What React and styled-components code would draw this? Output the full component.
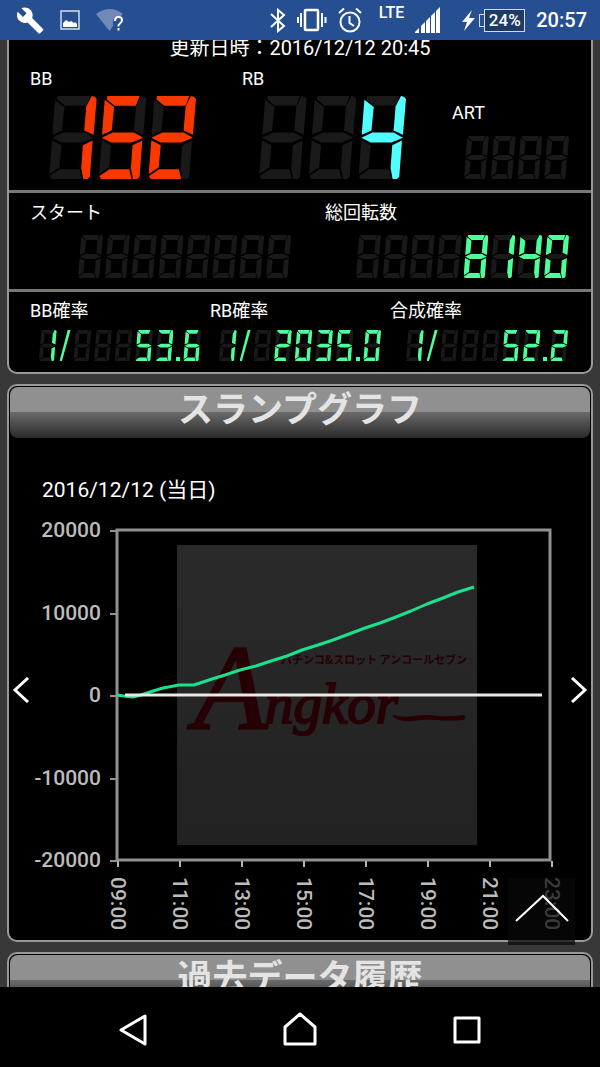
import React from 'react';
import styled, { createGlobalStyle } from 'styled-components';

const GlobalStyle = createGlobalStyle`
  * {
    box-sizing: border-box;
  }

  body {
    margin: 0;
    background-color: #383838;
    color: #fff;
    font-family: Roboto, "Noto Sans CJK JP", sans-serif;
  }

  button {
    margin: 0;
    padding: 0;
    border: none;
    background: none;
    color: inherit;
    cursor: pointer;
  }

  svg {
    display: block;
  }
`;

const Screen = styled.div`
  display: flex;
  flex-direction: column;
  height: 100vh;
`;

const StatusBar = styled.header`
  flex: none;
  display: flex;
  align-items: center;
  justify-content: space-between;
  height: 40px;
  padding: 0 13px 0 17px;
  background-color: #264f91;
`;

const StatusGroup = styled.div`
  display: flex;
  align-items: center;
  gap: ${({ $gap }) => $gap}px;
`;

const Network = styled.div`
  display: flex;
  align-items: center;
  gap: 11px;
  padding: 0 10px 0 6px;
`;

const NetworkType = styled.span`
  align-self: flex-start;
  font-size: 16px;
  font-weight: 500;
  line-height: 12px;
`;

const Power = styled.div`
  display: flex;
  align-items: center;
  gap: 3px;
`;

const Battery = styled.div`
  display: flex;
  align-items: center;
`;

const BatteryTip = styled.span`
  width: 5px;
  height: 13px;
  border: 1px solid #d4dcea;
  border-right: none;
`;

const BatteryLevel = styled.span`
  width: 41px;
  height: 23px;
  border: 1px solid #d4dcea;
  background-color: #1e3a68;
  font-size: 17px;
  font-weight: 500;
  line-height: 21px;
  text-align: center;
`;

const Clock = styled.time`
  font-size: 20px;
  font-weight: 500;
  line-height: 24px;
`;

const Content = styled.main`
  flex: 1;
  min-height: 0;
  display: flex;
  flex-direction: column;
  gap: 10px;
  padding: 0 7px;
  overflow: hidden;
`;

const Panel = styled.section`
  flex: none;
  border: 2px solid #999;
  border-top-width: ${({ $continued }) => ($continued ? 0 : 2)}px;
  border-radius: ${({ $continued }) => ($continued ? '0 0 10px 10px' : '10px')};
  background-color: #000;
`;

const Updated = styled.p`
  margin: 0;
  font-size: 20px;
  line-height: 16px;
  text-align: center;
`;

const CounterRow = styled.div`
  display: grid;
  grid-template-columns: ${({ $columns }) => $columns};
  padding: ${({ $pad }) => $pad}px 22px 11px 21px;

  & + & {
    border-top: 3px solid #777;
  }
`;

const Counter = styled.div`
  display: flex;
  flex-direction: column;
  align-items: ${({ $end }) => ($end ? 'flex-end' : 'flex-start')};
  justify-content: flex-end;
  gap: ${({ $gap }) => $gap}px;
`;

const CounterLabel = styled.span`
  align-self: flex-start;
  font-size: 18px;
  line-height: 24px;
`;

const Digits = styled.div`
  display: grid;
  grid-template-columns: ${({ $columns }) => $columns};
  gap: ${({ $gap }) => $gap}px;
  width: ${({ $width }) => $width}px;
  height: ${({ $height }) => $height}px;
  margin: 0 ${({ $right = 0 }) => $right}px 0 ${({ $left = 0 }) => $left}px;
`;

const DigitCell = styled.span`
  display: grid;
`;

const Segment = styled.span`
  grid-area: 1 / 1;
  clip-path: polygon(${({ $shape }) => $shape});
  background-color: ${({ $lit, $color }) => ($lit ? $color : '#191919')};
`;

const Slash = styled.span`
  clip-path: polygon(74% 0, 100% 0, 22% 100%, 0 100%);
  background-color: ${({ $color }) => $color};
`;

const Point = styled.span`
  align-self: end;
  height: 4px;
  background-color: ${({ $color }) => $color};
`;

const PanelTitle = styled.h2`
  height: 51px;
  margin: 1px;
  border-radius: 8px;
  background: linear-gradient(#909090 0, #909090 25px, #6b6b6b 25px, #2a2a2a 100%);
  color: #e4e4e4;
  font-size: 35px;
  font-weight: 700;
  line-height: 47px;
  text-align: center;
`;

const GraphDate = styled.p`
  margin: 37px 33px 10px;
  font-size: 21px;
  line-height: 30px;
`;

const GraphRow = styled.div`
  display: flex;
  align-items: flex-start;
`;

const PageButton = styled.button`
  flex: none;
  display: flex;
  align-items: center;
  justify-content: center;
  width: 24px;
  height: 350px;
`;

const Graph = styled.svg`
  flex: 1;
  min-width: 0;
  font-family: Roboto, sans-serif;
  font-size: 21px;
  font-weight: 500;
`;

const TopButton = styled.button`
  position: fixed;
  right: 25px;
  bottom: 122px;
  display: flex;
  align-items: center;
  justify-content: center;
  width: 67px;
  height: 67px;
  background-color: rgba(8, 8, 8, 0.72);
`;

const NavBar = styled.nav`
  flex: none;
  display: grid;
  grid-template-columns: repeat(3, 1fr);
  height: 80px;
  padding: 5px 50px 0;
  background-color: #000;
`;

const NavButton = styled.button`
  display: flex;
  align-items: center;
  justify-content: center;
`;

// Segment outlines on a 142 x 248 grid
const SEGMENTS = {
  a: [[26, 0], [122, 0], [111, 29], [47, 29], [24, 10]],
  b: [[127, 0], [136, 2], [142, 9], [133, 116], [105, 103], [111, 31]],
  c: [[130, 133], [122, 241], [115, 248], [102, 248], [96, 215], [101, 147]],
  d: [[2, 239], [32, 219], [91, 219], [98, 248], [7, 248]],
  e: [[9, 132], [37, 147], [31, 214], [1, 233]],
  f: [[18, 11], [46, 33], [39, 103], [10, 116]],
  g: [[9, 125], [42, 109], [105, 109], [133, 125], [98, 139], [37, 139]],
};

const LIT = {
  0: 'abcdef',
  1: 'bc',
  2: 'abged',
  3: 'abgcd',
  4: 'fgbc',
  5: 'afgcd',
  6: 'afgecd',
  8: 'abcdefg',
  ' ': '',
};

const toShape = (points) =>
  points.map(([x, y]) => `${(x / 142) * 100}% ${(y / 248) * 100}%`).join(', ');

const Digit = ({ value, color }) => (
  <DigitCell>
    {Object.keys(SEGMENTS).map((key) => (
      <Segment
        key={key}
        $shape={toShape(SEGMENTS[key])}
        $lit={LIT[value].includes(key)}
        $color={color}
      />
    ))}
  </DigitCell>
);

const Display = ({ value, color, columns, ...size }) => (
  <Digits
    role="img"
    aria-label={value.replace(/ /g, '') || '-'}
    $columns={columns || `repeat(${value.length}, 1fr)`}
    {...size}
  >
    {value.split('').map((char, index) => {
      if (char === '/') {
        return <Slash key={index} $color={color} />;
      }
      if (char === '.') {
        return <Point key={index} $color={color} />;
      }
      return <Digit key={index} value={char} color={color} />;
    })}
  </Digits>
);

const RED = '#f93800';
const CYAN = '#50ffff';
const GREEN = '#4dff98';

const rates = [
  { label: 'BB確率', value: '1/   53.6', left: 9 },
  { label: 'RB確率', value: '1/ 2035.0', left: 9 },
  { label: '合成確率', value: '1/   52.2', left: 16 },
];

const yLabels = [
  { text: '20000', y: 530 },
  { text: '10000', y: 613 },
  { text: '0', y: 695 },
  { text: '-10000', y: 778 },
  { text: '-20000', y: 860 },
];

const xLabels = ['09:00', '11:00', '13:00', '15:00', '17:00', '19:00', '21:00', '23:00'];

const series = [
  [117, 695], [124, 696], [133, 697], [141, 695], [150, 692], [163, 688], [179, 685], [194, 685],
  [212, 679], [225, 675], [240, 670], [256, 666], [271, 661], [287, 656], [302, 650], [318, 645],
  [333, 640], [349, 634], [365, 628], [380, 623], [396, 617], [411, 611], [427, 604], [443, 598],
  [458, 592], [474, 587],
];

const SlumpGraph = () => (
  <Graph viewBox="33 515 534 425" role="img" aria-label="スランプグラフ">
    <defs>
      <linearGradient id="plate" x1="0" y1="0" x2="0" y2="1">
        <stop offset="0" stopColor="#2a2a2a" />
        <stop offset="1" stopColor="#222" />
      </linearGradient>
    </defs>
    <rect x="177" y="545" width="300" height="300" fill="url(#plate)" />

    <g
      fill="#260004"
      stroke="#260004"
      strokeWidth="2"
      fontFamily="Liberation Serif, serif"
      fontStyle="italic"
      fontWeight="400"
    >
      <text x="194" y="729" fontSize="120">A</text>
      <text x="265" y="723" fontSize="57">ngkor</text>
      <path d="M394 716q8 3 20 1t26 0q12 1 23-1q3 1 0 3q-12 1-26 0t-24 1q-14 1-19-4z" strokeLinejoin="round" />
    </g>
    <text x="281" y="664" fill="#260004" fontFamily="Noto Sans CJK JP, sans-serif" fontSize="11" fontWeight="700">
      パチンコ&amp;スロット アンコールセブン
    </text>

    <rect x="117" y="530" width="433" height="330" fill="none" stroke="#909090" strokeWidth="3" />
    {yLabels.map(({ text, y }) => (
      <g key={text}>
        <path d={`M110 ${y + 1}h7`} stroke="#909090" strokeWidth="2" />
        <text x="101" y={y + 7} textAnchor="end" fill="#bcbcbc">{text}</text>
      </g>
    ))}
    {xLabels.map((text, index) => (
      <g key={text} transform={`translate(${117 + index * 62} 861)`}>
        <path d="M1 0v6" stroke="#b4b4b4" strokeWidth="2" />
        <text transform="translate(-6 16) rotate(90)" fill="#bcbcbc">{text}</text>
      </g>
    ))}

    <polyline
      points={series.map((point) => point.join(',')).join(' ')}
      fill="none"
      stroke="#1be08c"
      strokeWidth="3"
      strokeLinejoin="round"
    />
    <path d="M125 695H542" stroke="#e8e8e4" strokeWidth="3" />
  </Graph>
);

const App = () => {
  return (
    <Screen>
      <GlobalStyle />
      <StatusBar>
        <StatusGroup $gap={16}>
          <svg width="27" height="27" viewBox="1 1 22.5 22" fill="#fff">
            <path d="M22.7 19l-9.1-9.1c.9-2.3.4-5-1.5-6.9-2-2-5-2.4-7.4-1.3L9 6 6 9 1.6 4.7C.4 7.1.9 10.1 2.9 12.1c1.9 1.9 4.6 2.4 6.9 1.5l9.1 9.1c.4.4 1 .4 1.4 0l2.3-2.3c.5-.4.5-1.1.1-1.4z" />
          </svg>
          <svg width="20" height="20" viewBox="0 0 20 20">
            <rect x="1" y="1" width="18" height="18" fill="none" stroke="#d4dcea" strokeWidth="1.5" />
            <path d="M3 17v-4l3-3 3 2 2-1 3 2 1-1 2 2v3z" fill="#fff" />
          </svg>
          <svg width="28" height="24" viewBox="0 0 28 24">
            <path d="M0 6Q14-4 27 6L24 9Q17 8 17 14L17 18 13.500 23z" fill="#7189b6" />
            <path d="M19 13q0-4 3.500-4t3.500 3q0 2-2 3.500t-1.500 3M22.500 20v2.500" fill="none" stroke="#fff" strokeWidth="2" />
          </svg>
        </StatusGroup>
        <StatusGroup $gap={11}>
          <svg width="16" height="25" viewBox="0 0 16 25" fill="none" stroke="#fff" strokeWidth="2">
            <path d="M1 6l13 12-6 5V2l6 5L1 19" />
          </svg>
          <svg width="30" height="24" viewBox="0 0 30 24" fill="none" stroke="#fff">
            <rect x="8" y="2" width="13" height="20" rx="1" strokeWidth="2.500" />
            <path d="M4 5v14M25 5v14" strokeWidth="2" />
            <path d="M1 9v6M28.500 9v6" strokeWidth="2" />
          </svg>
          <svg width="24" height="26" viewBox="0 0 24 26" fill="none" stroke="#fff" strokeWidth="2">
            <circle cx="12" cy="15" r="9.500" />
            <path d="M11.500 9v7l4.500 3M1 6l5-4.500M23 6l-5-4.500" />
          </svg>
          <Network>
            <NetworkType>LTE</NetworkType>
            <svg width="26" height="26" viewBox="0 0 26 26" fill="#fff">
              <path d="M0 26v-1l4-4v5zM6 26v-7l4-4v11zM11 26V14l4-4v16zM16 26V9l4-4v21zM21 26V4l4-4v26z" />
            </svg>
          </Network>
          <Power>
            <svg width="14" height="21" viewBox="0 0 14 21" fill="#fff">
              <path d="M10 0L0 12h5L2 21 13 8H7z" />
            </svg>
            <Battery>
              <BatteryTip />
              <BatteryLevel>24%</BatteryLevel>
            </Battery>
          </Power>
          <Clock>20:57</Clock>
        </StatusGroup>
      </StatusBar>

      <Content>
        <Panel $continued>
          <Updated>更新日時：2016/12/12 20:45</Updated>
          <CounterRow $columns="212fr 210fr 117fr" $pad={11}>
            <Counter $gap={5}>
              <CounterLabel>BB</CounterLabel>
              <Display value="152" color={RED} $gap={2} $width={147} $height={83} $left={19} />
            </Counter>
            <Counter $gap={5}>
              <CounterLabel>RB</CounterLabel>
              <Display value="  4" color={CYAN} $gap={2} $width={147} $height={83} $left={17} />
            </Counter>
            <Counter $gap={11} $end>
              <CounterLabel>ART</CounterLabel>
              <Display value="    " color={GREEN} $gap={2} $width={105} $height={43} />
            </Counter>
          </CounterRow>
          <CounterRow $columns="295fr 244fr" $pad={8}>
            <Counter $gap={10} $end>
              <CounterLabel>スタート</CounterLabel>
              <Display value="        " color={GREEN} $gap={2} $width={213} $height={43} $right={34} />
            </Counter>
            <Counter $gap={10} $end>
              <CounterLabel>総回転数</CounterLabel>
              <Display value="    8140" color={GREEN} $gap={2} $width={213} $height={43} />
            </Counter>
          </CounterRow>
          <CounterRow $columns="180fr 180fr 179fr" $pad={7}>
            {rates.map(({ label, value, left }) => (
              <Counter key={label} $gap={7}>
                <CounterLabel>{label}</CounterLabel>
                <Display
                  value={value}
                  color={GREEN}
                  columns="35fr 22fr repeat(5, 35fr) 8fr 35fr"
                  $gap={3}
                  $width={162}
                  $height={31}
                  $left={left}
                />
              </Counter>
            ))}
          </CounterRow>
        </Panel>

        <Panel>
          <PanelTitle>スランプグラフ</PanelTitle>
          <GraphDate>2016/12/12 (当日)</GraphDate>
          <GraphRow>
            <PageButton type="button" aria-label="前へ">
              <svg width="18" height="26" viewBox="0 0 18 26" fill="none" stroke="#fff" strokeWidth="3">
                <path d="M16 1L3 13l13 12" />
              </svg>
            </PageButton>
            <SlumpGraph />
            <PageButton type="button" aria-label="次へ">
              <svg width="18" height="26" viewBox="0 0 18 26" fill="none" stroke="#fff" strokeWidth="3">
                <path d="M2 1l13 12L2 25" />
              </svg>
            </PageButton>
          </GraphRow>
        </Panel>

        <Panel>
          <PanelTitle>過去データ履歴</PanelTitle>
        </Panel>
      </Content>

      <TopButton type="button" aria-label="ページの先頭へ">
        <svg width="54" height="36" viewBox="0 0 54 36" fill="none" stroke="#fff" strokeWidth="2">
          <path d="M1 27L28 2l25 25" />
        </svg>
      </TopButton>

      <NavBar>
        <NavButton type="button" aria-label="戻る">
          <svg width="36" height="36" viewBox="0 0 36 36" fill="none" stroke="#fff" strokeWidth="3" strokeLinejoin="round">
            <path d="M30 4v28L6 18z" />
          </svg>
        </NavButton>
        <NavButton type="button" aria-label="ホーム">
          <svg width="36" height="36" viewBox="0 0 36 36" fill="none" stroke="#fff" strokeWidth="3" strokeLinejoin="round">
            <path d="M3 32V15L18 2l15 13v17z" />
          </svg>
        </NavButton>
        <NavButton type="button" aria-label="アプリ履歴">
          <svg width="36" height="36" viewBox="0 0 36 36" fill="none" stroke="#fff" strokeWidth="3" strokeLinejoin="round">
            <rect x="6" y="6" width="24" height="24" />
          </svg>
        </NavButton>
      </NavBar>
    </Screen>
  );
};

export default App;
